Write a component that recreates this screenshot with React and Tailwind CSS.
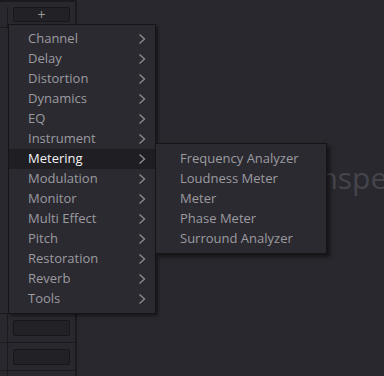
import { useState } from "react";

const CATEGORIES = [
  "Channel", "Delay", "Distortion", "Dynamics", "EQ", "Instrument", "Metering",
  "Modulation", "Monitor", "Multi Effect", "Pitch", "Restoration", "Reverb", "Tools",
];

const METERING = ["Frequency Analyzer", "Loudness Meter", "Meter", "Phase Meter", "Surround Analyzer"];

const Chevron = () => (
  <svg width="8" height="12" viewBox="0 0 8 12" className="shrink-0">
    <path d="M1.5 1.5 L6.5 6 L1.5 10.5" fill="none" stroke="#8a8a8e" strokeWidth="1.4" />
  </svg>
);

const SlotRow = ({ h, children }) => (
  <div className={`${h} flex items-center border-b border-[#1b1a1e]`}>
    <div className="w-[8px] h-full border-r border-[#1b1a1e]" />
    <div className="flex-1 px-[5px]">{children}</div>
  </div>
);

export default function App() {
  const [active] = useState("Metering");

  return (
    <div className="relative w-[384px] h-[376px] overflow-hidden bg-[#29282e] flex" style={{ fontFamily: '"Open Sans", "Noto Sans", sans-serif' }}>
      {/* insert slots strip */}
      <div className="w-[77px] shrink-0 h-full border-r-2 border-[#1b1a1e] flex flex-col">
        <div className="h-[2px] bg-[#1b1a1e]" />
        <div className="h-[26px] flex items-start pt-[5px] border-b border-[#1b1a1e]">
          <div className="w-[8px] h-full border-r border-[#1b1a1e]" />
          <div className="flex-1 px-[5px]">
            <div className="h-[15px] rounded-[2px] bg-[#222125] border border-[#17161a] flex items-center justify-center text-[#9a9a9e] text-[14px] leading-none">+</div>
          </div>
        </div>
        <div className="flex-1" />
        <div className="h-[1px] bg-[#1b1a1e]" />
        <SlotRow h="h-[29px]">
          <div className="h-[16px] rounded-[2px] bg-[#222125] border border-[#17161a]" />
        </SlotRow>
        <SlotRow h="h-[28px]">
          <div className="h-[16px] rounded-[2px] bg-[#222125] border border-[#17161a]" />
        </SlotRow>
        <div className="h-[5px] flex">
          <div className="w-[8px] h-full border-r border-[#1b1a1e]" />
        </div>
      </div>

      {/* inspector placeholder */}
      <div className="flex-1 min-w-0 overflow-hidden pt-[158px] pl-[234px] text-[30px] leading-[40px] text-[#45444c] whitespace-nowrap">
        Inspector
      </div>

      {/* main plug-in menu */}
      <div className="absolute left-[8px] top-[24px] w-[148px] py-[4px] bg-[#2b2a30] border border-[#151418] shadow-[2px_2px_3px_rgba(0,0,0,0.45)]">
        {CATEGORIES.map((c) => (
          <div
            key={c}
            className={`h-[20px] flex items-center pl-[19px] pr-[9px] text-[13px] ${c === active ? "bg-[#1f1e23] text-[#f2f2f2]" : "text-[#9b9ba0]"}`}
          >
            <span className="flex-1">{c}</span>
            <Chevron />
          </div>
        ))}
      </div>

      {/* metering submenu */}
      <div className="absolute left-[155px] top-[143px] w-[172px] pt-[5px] pb-[4px] bg-[#2b2a30] border border-[#151418] shadow-[3px_3px_4px_rgba(0,0,0,0.5)]">
        {METERING.map((m) => (
          <div key={m} className="h-[20px] flex items-center pl-[24px] text-[13px] text-[#9b9ba0]">
            {m}
          </div>
        ))}
      </div>
    </div>
  );
}
